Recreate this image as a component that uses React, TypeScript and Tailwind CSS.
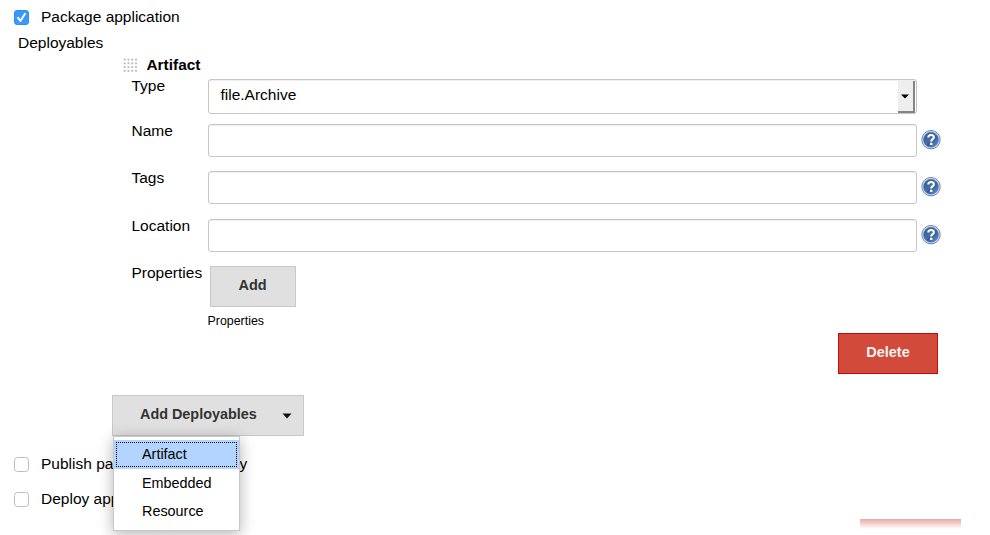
import React from "react";

function Checkbox({ checked, label }: { checked?: boolean; label: string }) {
  return (
    <label className="flex h-[35px] items-center pl-[14px]">
      {checked ? (
        <svg width="15" height="15" viewBox="0 0 15 15" className="mr-3 block shrink-0">
          <rect x="0.5" y="0.5" width="14" height="14" rx="2.5" fill="#3b99fc" stroke="#2e8ff4" />
          <path d="M4 7.8 L6.4 10.9 L11 3.8" fill="none" stroke="#fff" strokeWidth="1.9" strokeLinecap="round" strokeLinejoin="round" />
        </svg>
      ) : (
        <span className="mr-3 h-[15px] w-[15px] shrink-0 rounded-[3.5px] border border-[#bdbdbd] bg-white" />
      )}
      <span className="-mt-[2px] whitespace-pre">{label}</span>
    </label>
  );
}

function HelpIcon() {
  return (
    <svg width="20" height="20" viewBox="0 0 20 20" className="mt-[6px] ml-[4px] block shrink-0">
      <defs>
        <linearGradient id="help" x1="0" y1="0" x2="1" y2="1">
          <stop offset="0" stopColor="#2d579a" />
          <stop offset="0.5" stopColor="#47709f" />
          <stop offset="0.55" stopColor="#305c9f" />
          <stop offset="1" stopColor="#7297c9" />
        </linearGradient>
      </defs>
      <circle cx="10" cy="9.7" r="9.2" fill="#dce6f3" stroke="#6283b6" strokeWidth="1" />
      <circle cx="10" cy="9.7" r="7.5" fill="url(#help)" stroke="#4c72ad" strokeWidth="0.6" />
      <path d="M7.3 7.5 C7.3 4.3 12.9 4.3 12.9 7.2 C12.9 9.2 10.2 9.1 10.2 11.5" fill="none" stroke="#fff" strokeWidth="2.1" />
      <rect x="9" y="12.7" width="2.4" height="2.3" fill="#fff" />
    </svg>
  );
}

function Field({ label }: { label: string }) {
  return (
    <div className="flex h-[47.3px] items-start">
      <span className="-mt-[2px] w-[76px] leading-[18px]">{label}</span>
      <input
        aria-label={label}
        className="h-[33px] w-[709px] rounded-[3px] border border-[#c6c6c6] bg-white shadow-[inset_0_1px_1px_#eeeeee] outline-none"
      />
      <HelpIcon />
    </div>
  );
}

function DragHandle() {
  return (
    <svg width="15" height="15" viewBox="0 0 15 15" className="mr-[8.5px] block">
      {[0, 1, 2, 3].map((r) =>
        [0, 1, 2, 3].map((c) => (
          <g key={`${r}-${c}`}>
            <rect x={c * 3.75 + 0.5} y={r * 3.75 + 0.5} width="2" height="2" fill="#d2d2d0" />
            <rect x={c * 3.75 + 1.3} y={r * 3.75 + 1.1} width="1.3" height="1.3" fill="#b5b5b0" />
          </g>
        ))
      )}
    </svg>
  );
}

export default function App() {
  return (
    <main className="h-[535px] w-[990px] overflow-hidden bg-white font-['Liberation_Sans',Arial,sans-serif] text-[15.5px] leading-[18px] text-black">
      <Checkbox checked label="Package application" />
      <div className="-mt-px h-[22px] pl-[18px] leading-[18px]">Deployables</div>

      <section className="pl-[123px]">
        <div className="flex h-[19px] items-center font-bold">
          <DragHandle />
          <span className="-mt-[2px] text-[15.4px]">Artifact</span>
        </div>
        <div className="pl-[8.5px]">
          <div className="flex h-[49px] items-start pt-[4px]">
            <span className="-mt-[2px] w-[76px]">Type</span>
            <div className="flex h-[35px] w-[709px] items-start justify-between rounded-[3px] border border-[#c6c6c6] bg-white pl-[12px] shadow-[inset_0_1px_1px_#eeeeee]">
              <span className="mt-[6px] text-[15.5px]">file.Archive</span>
              <span className="mt-px mr-px flex h-[32px] w-[17px] items-center justify-center border-r-2 border-b-2 border-[#858585] bg-[#eeeeee]">
                <svg width="8" height="5" viewBox="0 0 8 5" className="mr-px"><path d="M0 0.5 H8 L4 4.5 Z" /></svg>
              </span>
            </div>
          </div>
          <Field label="Name" />
          <Field label="Tags" />
          <Field label="Location" />
          <div className="flex h-[67.3px] items-start">
            <span className="-mt-[2px] w-[76px]">Properties</span>
            <div>
              <button className="ml-[2px] block h-[41px] w-[86px] border border-[#c8c8c8] bg-[#e0e0e0] pb-[3px] text-[14.5px] font-bold text-[#333333]">Add</button>
              <div className="mt-[5px] text-[12.4px]">Properties</div>
            </div>
          </div>
        </div>
      </section>

      <div className="flex h-[62px] pl-[838px]">
        <button className="h-[41px] w-[100px] border border-[#c4090b] bg-[#d14a3a] pb-[3px] text-[14.5px] font-bold text-[#f2f2f2]">Delete</button>
      </div>

      <div className="relative ml-[112px] h-[52px] w-[192px]">
        <button className="flex h-[41px] w-full items-center justify-between border border-[#c8c8c8] bg-[#e0e0e0] pr-[11px] pb-[3px] pl-[27px] text-[14.4px] font-bold text-[#333333]">
          Add Deployables
          <svg width="10" height="6" viewBox="0 0 10 6" className="mt-[3px]"><path d="M0.5 0.5 H9.5 L5 5.5 Z" fill="#111" /></svg>
        </button>
        <div className="absolute top-[41px] left-px z-10 h-[95px] w-[127px] border border-[#c8c8c8] bg-white pt-[3px] text-[14.4px] shadow-[0_3px_14px_rgba(0,0,0,0.3)]">
          <div className="h-[29px] bg-[#b3d4ff] p-[2px]">
            <div className="flex h-full items-center border border-dotted border-black pb-[2px] pl-[25px]">Artifact</div>
          </div>
          <div className="flex h-[29px] items-center pb-[2px] pl-[28px]">Embedded</div>
          <div className="flex h-[29px] items-center pb-[3px] pl-[28px]">Resource</div>
        </div>
      </div>

      <Checkbox label="Publish package to XL Deploy" />
      <Checkbox label="Deploy application" />
      <div className="mt-[2px] ml-[860px] h-[10px] w-[101px] bg-linear-to-b from-[#e9aaa4] to-white" />
    </main>
  );
}
